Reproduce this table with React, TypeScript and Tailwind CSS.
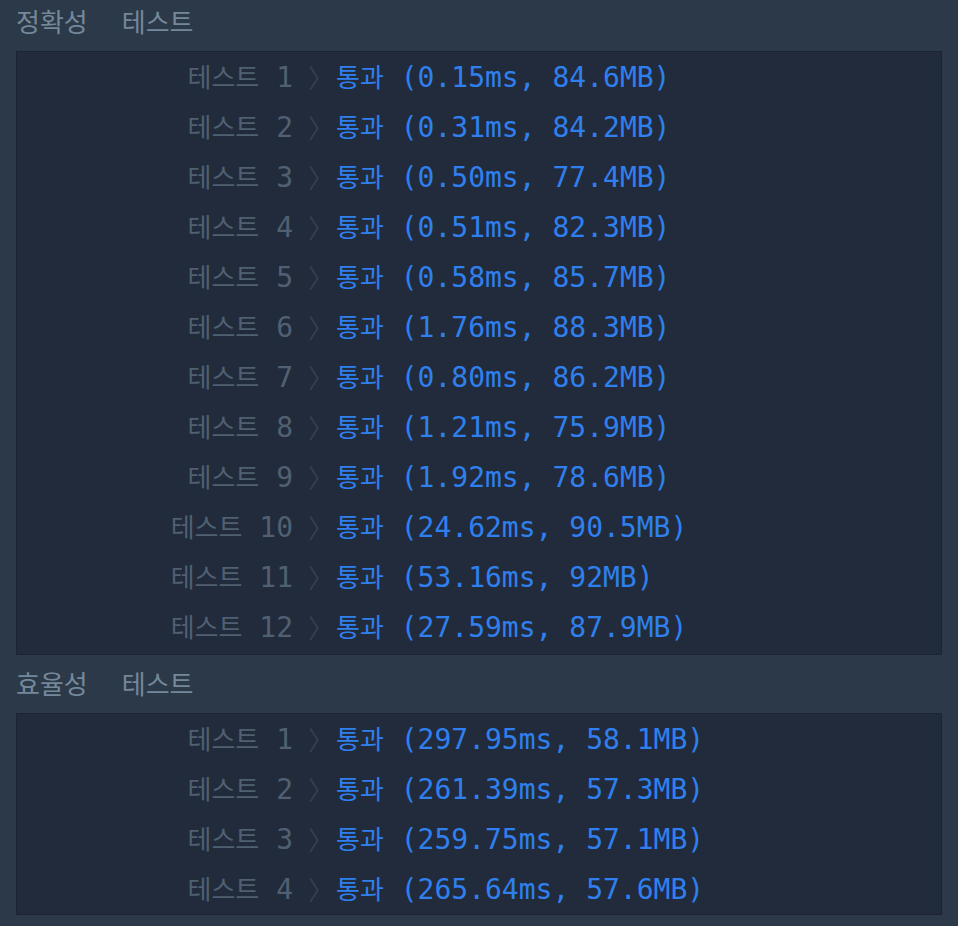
import React from "react";

const accuracy: [string, string][] = [
  ["0.15", "84.6"],
  ["0.31", "84.2"],
  ["0.50", "77.4"],
  ["0.51", "82.3"],
  ["0.58", "85.7"],
  ["1.76", "88.3"],
  ["0.80", "86.2"],
  ["1.21", "75.9"],
  ["1.92", "78.6"],
  ["24.62", "90.5"],
  ["53.16", "92"],
  ["27.59", "87.9"],
];

const efficiency: [string, string][] = [
  ["297.95", "58.1"],
  ["261.39", "57.3"],
  ["259.75", "57.1"],
  ["265.64", "57.6"],
];

function Kr({ children, className = "" }: { children: React.ReactNode; className?: string }) {
  return (
    <span className={"font-['Noto_Sans_CJK_KR',sans-serif] text-[26px] " + className}>
      {children}
    </span>
  );
}

function Row({ n, ms, mb }: { n: number; ms: string; mb: string }) {
  return (
    <div className="flex h-[50px] items-center whitespace-pre leading-[50px]">
      <div className="w-[276px] text-right text-[#506072]">
        <Kr>테스트</Kr> {n}
      </div>
      <div className="w-[43px] pl-[15px] font-['Noto_Sans_CJK_KR',sans-serif] text-[26px] text-[#353f4f]">
        〉
      </div>
      <div className="w-auto pl-0 text-[#2f80ee]">
        <Kr>통과</Kr> ({ms}ms, {mb}MB)
      </div>
    </div>
  );
}

function Section({
  title,
  rows,
  first,
}: {
  title: string;
  rows: [string, string][];
  first?: boolean;
}) {
  return (
    <section>
      <div
        className={
          first
            ? "flex h-[51px] items-center pb-[11px] text-[#74889a]"
            : "flex h-[58px] items-center pb-[4px] text-[#74889a]"
        }
      >
        <Kr>{title}</Kr>
        <Kr className="ml-[34px]">테스트</Kr>
      </div>
      <div
        className={
          first
            ? "border border-[#1c2432] bg-[#222b3b] pb-[2px]"
            : "border border-[#1c2432] bg-[#222b3b]"
        }
      >
        {rows.map(([ms, mb], i) => (
          <Row key={i} n={i + 1} ms={ms} mb={mb} />
        ))}
      </div>
    </section>
  );
}

export default function App() {
  return (
    <div className="min-h-[926px] w-full bg-[#2c3948] px-4 font-['DejaVu_Sans_Mono','Noto_Sans_CJK_KR',monospace] text-[28px]">
      <Section title="정확성" rows={accuracy} first />
      <Section title="효율성" rows={efficiency} />
    </div>
  );
}
